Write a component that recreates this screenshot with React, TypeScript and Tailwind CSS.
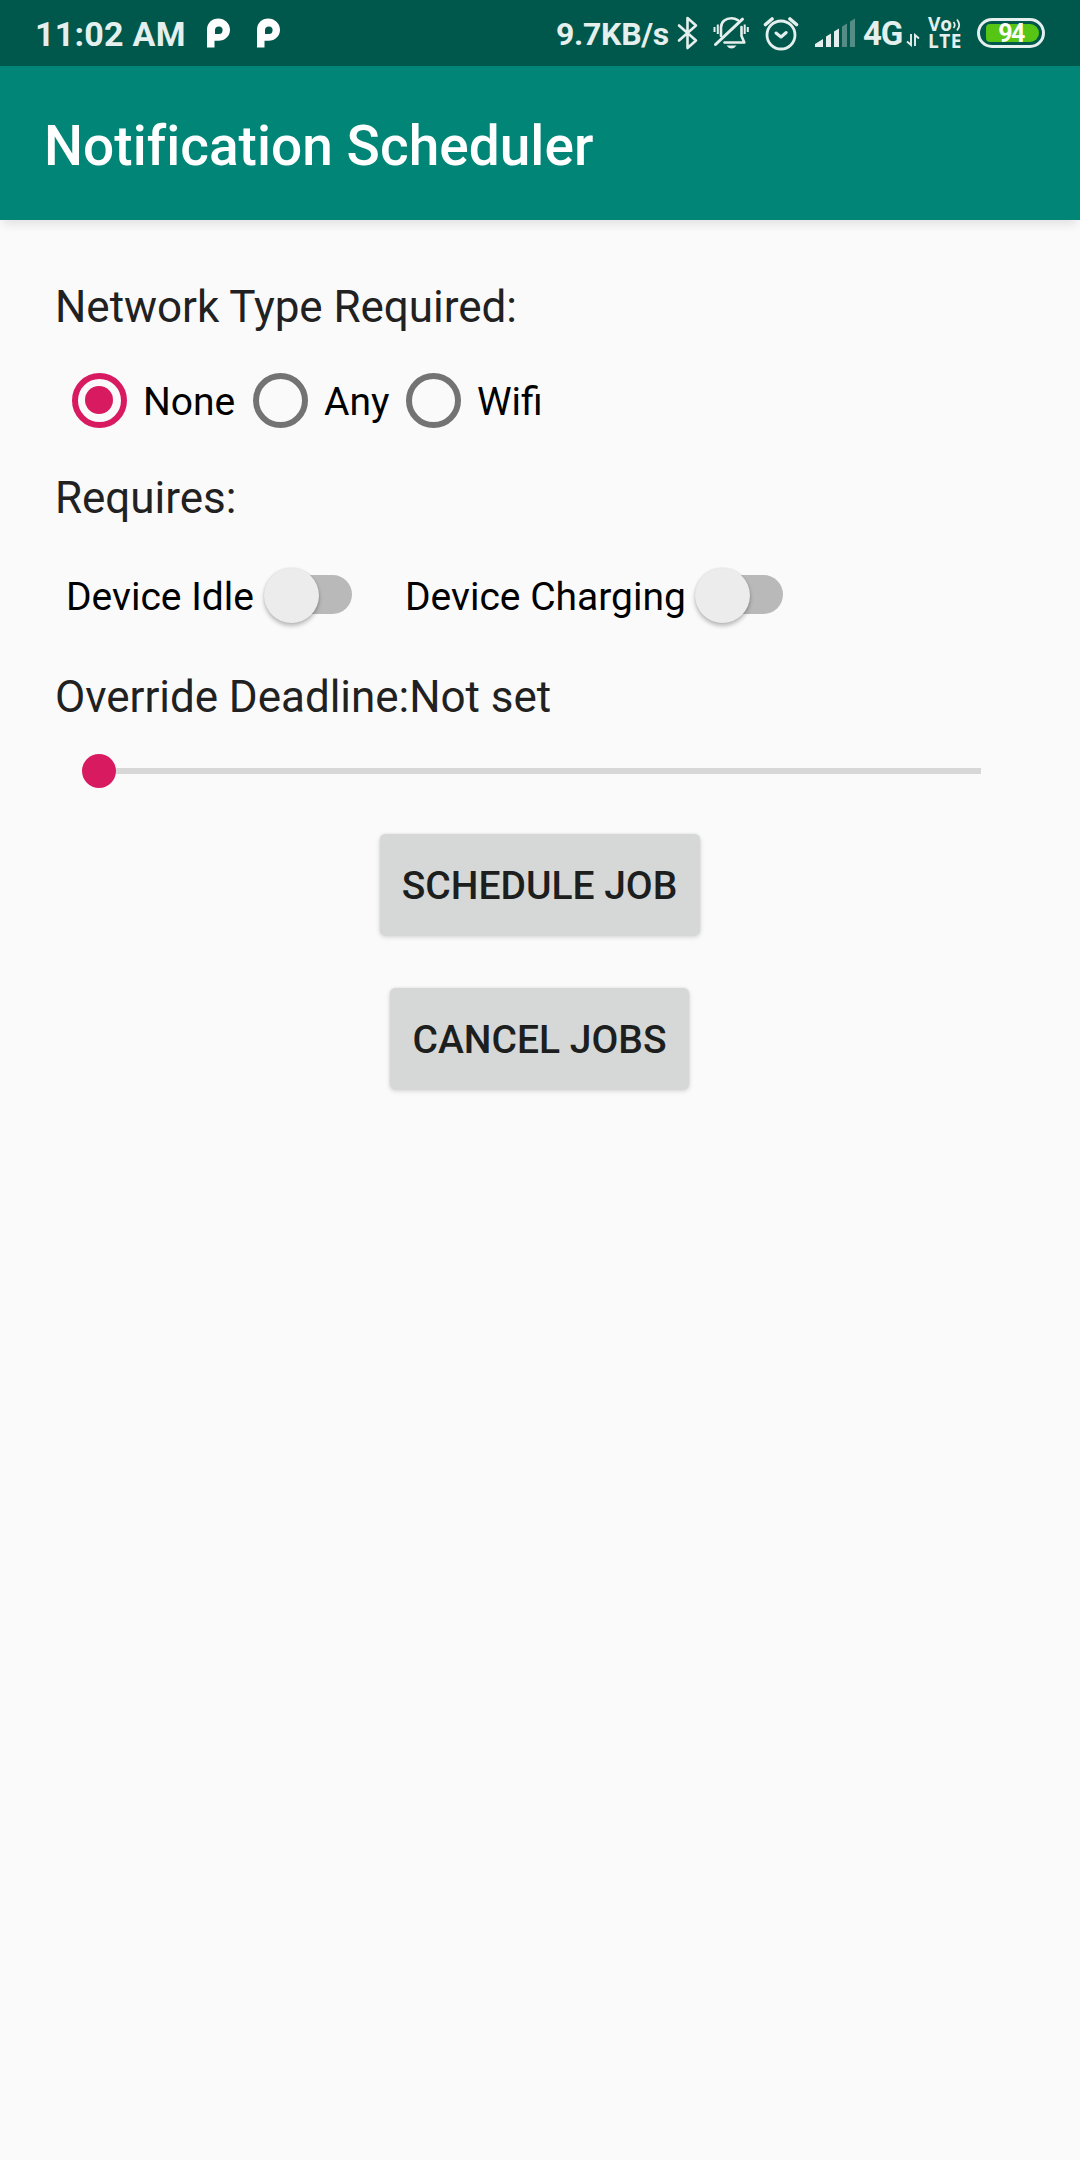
import type { ReactNode } from "react";

function ParkingLogo() {
  return (
    <svg width="25" height="30" viewBox="0 0 25 30">
      <path
        fill="#ffffff"
        fillRule="evenodd"
        d="M1 29.5V11.5C1 5 6 .5 12.3.5S24 5.400 24 11.700 19 22.700 12.600 22.700H8.500V29.500ZM9 16H12.500A3.800 3.800 0 1 0 9 12Z"
      />
    </svg>
  );
}

function BluetoothGlyph() {
  return (
    <svg width="22" height="34" viewBox="0 0 22 34" fill="none" stroke="#e5efed" strokeWidth="2.600" strokeLinecap="round" strokeLinejoin="round">
      <path d="M2 9.500 19 24.500 10.500 32V2L19 9.500 2 24.500" />
    </svg>
  );
}

function BellOff() {
  return (
    <svg width="36" height="34" viewBox="0 0 36 34" fill="none" stroke="#e5efed" strokeWidth="2.600" strokeLinecap="round">
      <path d="M8 20V11.500C8 6 12.500 2.300 18.500 2.300 21 2.300 23 3 24.800 4.200" />
      <path d="M28.500 11V20L31.300 26.500H11.500" strokeLinejoin="round" />
      <path d="M29.500 3.200 2.500 28.500" strokeWidth="3" />
      <path d="M4.800 8.500V18M1.500 11V16M31.700 8.500V18M34.800 11V16" strokeWidth="2" strokeLinecap="butt" />
      <path d="M13.500 29.500H23.500Q21.500 32.500 18.500 32.500T13.500 29.500Z" fill="#e5efed" stroke="none" />
    </svg>
  );
}

function AlarmGlyph() {
  return (
    <svg width="36" height="36" viewBox="0 0 36 36" fill="none" stroke="#e5efed" strokeLinecap="round" strokeLinejoin="round">
      <circle cx="18" cy="20" r="14" strokeWidth="2.800" />
      <path d="M13 18 18 22 23.200 17.500" strokeWidth="3" />
      <path d="M2.500 9.500 9 4M27 4 33.500 9.500" strokeWidth="3.600" />
    </svg>
  );
}

function SignalBars() {
  return (
    <svg width="41" height="30" viewBox="0 0 41 30" fill="#e5efed">
      <path d="M0 29V26L8 21V29ZM11 29V18.500L16 15.500V29ZM19 29V13.500L24 10.500V29Z" />
      <path d="M27 29V8.500L32 5.500V29ZM35 29V3.500L40 .5V29Z" opacity=".36" />
    </svg>
  );
}

function DataArrows() {
  return (
    <svg width="14" height="14" viewBox="0 0 14 14" fill="none" stroke="#e5efed" strokeWidth="1.900">
      <path d="M5 1V12L1 8.500M9 13V2L13 5.500" />
    </svg>
  );
}

function SoundWaves() {
  return (
    <svg width="9" height="14" viewBox="0 0 9 14" fill="none" stroke="#e5efed" strokeWidth="1.700">
      <path d="M1.500 4Q4 7 1.500 10M5 1.500Q9.500 7 5 12.500" />
    </svg>
  );
}

function StatusBar() {
  return (
    <div className="flex h-[66px] bg-[#00574b] font-bold text-[#e5efed]">
      <div className="ml-[35px] mt-[14px] w-[171px] text-[34px] leading-[40px] tracking-[0.250px]">11:02 AM</div>
      <div className="mt-[18px] flex gap-[25px]">
        <ParkingLogo />
        <ParkingLogo />
      </div>
      <div className="ml-[274px] mt-[14px] w-[122px] whitespace-nowrap pl-px text-[32px] leading-[40px] tracking-[-0.300px]">9.7KB/s</div>
      <div className="mt-[16px] w-[36px]"><BluetoothGlyph /></div>
      <div className="mt-[16px] w-[50px]"><BellOff /></div>
      <div className="mt-[15px] w-[52px]"><AlarmGlyph /></div>
      <div className="mt-[18px] w-[48px]"><SignalBars /></div>
      <div className="mt-[14px] w-[43px] text-[33px] leading-[40px] tracking-[-1.300px]">4G</div>
      <div className="mt-[33px] w-[22px]"><DataArrows /></div>
      <div className="mt-[16px] w-[49px] font-['Open_Sans'] text-[19px] leading-[17px]">
        <div className="flex items-center">Vo<SoundWaves /></div>
        <div className="tracking-[0.500px]">LTE</div>
      </div>
      <div className="mt-[18px] h-[30px] w-[68px] rounded-full border-[3px] border-[#e5efed] py-[3px] pl-[6px] pr-[3px]">
        <div className="flex h-[18px] items-center justify-center rounded-l-[4px] rounded-r-[9px] bg-[#56c514] pr-[3px] pt-px text-[25px] leading-[18px] tracking-[-1.500px] text-white">94</div>
      </div>
    </div>
  );
}

function Radio({ label, checked, width }: { label: string; checked?: boolean; width: string }) {
  return (
    <div className={`flex h-[88px] items-center ${width}`}>
      <div className="flex w-[88px] shrink-0 pl-[16.500px]">
        {checked ? (
          <div className="flex size-[55px] items-center justify-center rounded-full border-[6px] border-[#d81b60]">
            <div className="size-[28px] rounded-full bg-[#d81b60]" />
          </div>
        ) : (
          <div className="size-[55px] rounded-full border-[6px] border-[#737373]" />
        )}
      </div>
      <div className="pt-[4px] text-[39px] leading-[46px] text-black">{label}</div>
    </div>
  );
}

function Toggle({ label, width }: { label: string; width: string }) {
  return (
    <div className={`flex items-center ${width}`}>
      <div className="grow whitespace-nowrap pt-[4px] text-[39px] leading-[46px] text-black">{label}</div>
      <div className="flex h-[39px] w-[88px] shrink-0 items-center rounded-full bg-[linear-gradient(90deg,transparent_28px,#b9b9b9_28px)]">
        <div className="mt-px size-[55px] shrink-0 rounded-full bg-[#ececec] shadow-[0_3px_4px_rgba(0,0,0,0.25),0_0_2px_rgba(0,0,0,0.12)]" />
      </div>
    </div>
  );
}

function Heading({ children }: { children: ReactNode }) {
  return <div className="h-[52px] text-[44px] leading-[52px] tracking-[-0.040px] text-[#212121]">{children}</div>;
}

function RaisedButton({ children, width }: { children: ReactNode; width: string }) {
  return (
    <button className={`h-[101px] whitespace-nowrap rounded-[5.500px] bg-[#d6d8d7] pt-[3px] text-[39px] font-medium leading-[46px] text-[#1d1e1e] shadow-[0_2px_5px_rgba(0,0,0,0.16),0_0_3px_rgba(0,0,0,0.08)] ${width}`}>
      {children}
    </button>
  );
}

export default function App() {
  return (
    <div className="h-[2160px] w-[1080px] overflow-hidden bg-[#fafafa] font-['Roboto',sans-serif]">
      <StatusBar />
      <header className="flex h-[154px] items-center bg-[#008577] pl-[44px] pt-[5px] shadow-[0_8px_9px_-3px_rgba(0,0,0,0.09)]">
        <h1 className="text-[55px] font-medium leading-[64px] tracking-[0.030px] text-white">Notification Scheduler</h1>
      </header>
      <main className="flex flex-col pl-[55px] pt-[61px]">
        <Heading>Network Type Required:</Heading>
        <div className="mt-[23px] flex">
          <Radio label="None" checked width="w-[181px]" />
          <Radio label="Any" width="w-[153px]" />
          <Radio label="Wifi" width="w-[170px]" />
        </div>
        <div className="mt-[28px]"><Heading>Requires:</Heading></div>
        <div className="mt-[43px] flex h-[55px] items-center gap-[53px] pl-[11px]">
          <Toggle label="Device Idle" width="w-[286px]" />
          <Toggle label="Device Charging" width="w-[378px]" />
        </div>
        <div className="mt-[49px]"><Heading>Override Deadline:Not set</Heading></div>
        <div className="ml-[27px] mt-[31px] flex h-[34px] items-center">
          <div className="size-[34px] rounded-full bg-[#d81b60]" />
          <div className="h-[6px] w-[865px] bg-[#d7d7d7]" />
        </div>
        <div className="mr-[56px] mt-[46px] flex flex-col items-center gap-[53px]">
          <RaisedButton width="w-[320px]">SCHEDULE JOB</RaisedButton>
          <RaisedButton width="w-[299px]">CANCEL JOBS</RaisedButton>
        </div>
      </main>
    </div>
  );
}
